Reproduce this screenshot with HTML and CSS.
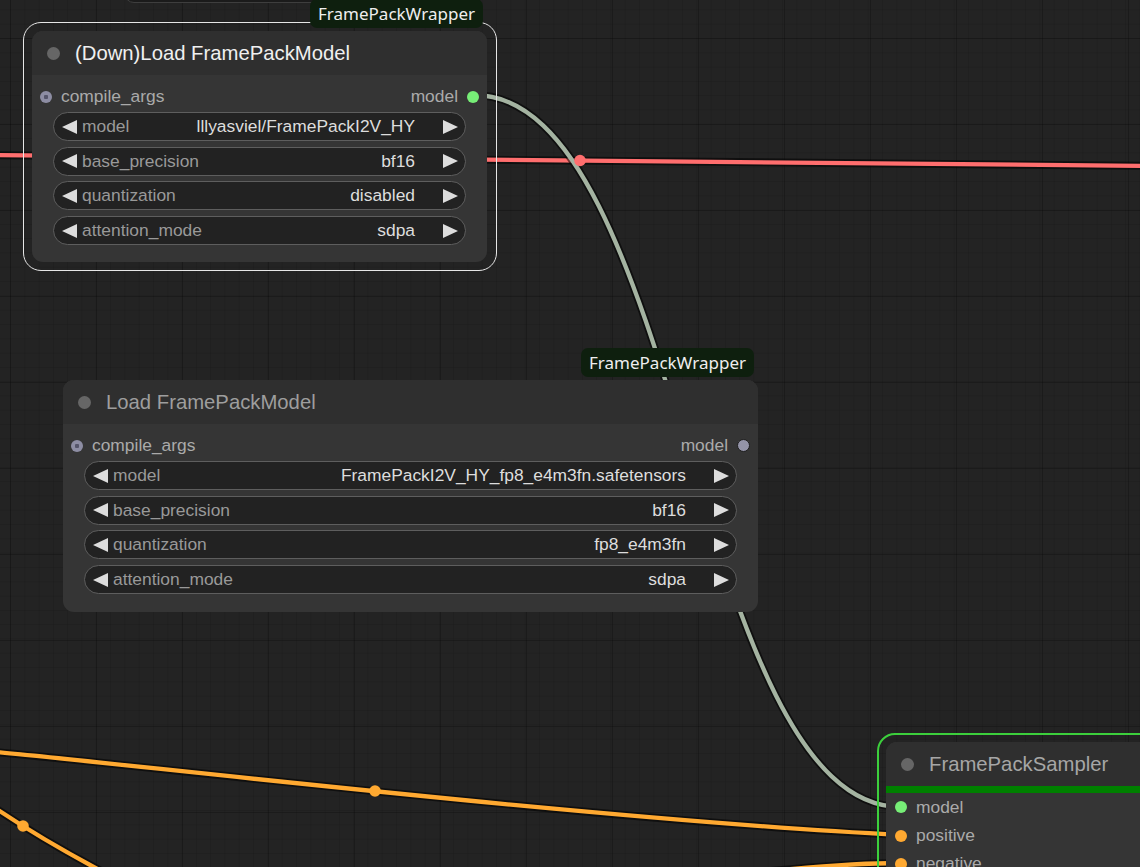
FILE: index.html
```html
<!DOCTYPE html>
<html>
<head>
<meta charset="utf-8">
<link rel="stylesheet" href="styles.css">
</head>
<body>
<div class="canvas">
  <div class="ghost"></div>
  <svg class="links" width="1140" height="867" viewBox="0 0 1140 867">
    <g fill="none" stroke-linecap="round">
      <path class="lb" d="M -20 155 C 300 157, 700 161, 1160 166"/>
      <path class="lc red" d="M -20 155 C 300 157, 700 161, 1160 166"/>
      <path class="lb" d="M 474 95 C 681 95, 694 807, 901 807"/>
      <path class="lc gray" d="M 474 95 C 681 95, 694 807, 901 807"/>
      <path class="lb" d="M -5 752 C 120 763, 600 820, 901 835"/>
      <path class="lc orange" d="M -5 752 C 120 763, 600 820, 901 835"/>
      <path class="lb" d="M -25 794 C 0 812, 35 836, 105 873"/>
      <path class="lc orange" d="M -25 794 C 0 812, 35 836, 105 873"/>
      <path class="lb" d="M 760 872 C 820 866, 860 863, 901 863"/>
      <path class="lc orange" d="M 760 872 C 820 866, 860 863, 901 863"/>
    </g>
    <circle class="mid red-f" cx="580" cy="160.5" r="5.8"/>
    <circle class="mid orange-f" cx="375" cy="791" r="5.8"/>
    <circle class="mid orange-f" cx="23" cy="826" r="5.8"/>
  </svg>

  <div class="node n1 selected">
    <div class="badge">FramePackWrapper</div>
    <div class="title"><span class="tdot"></span><span>(Down)Load FramePackModel</span></div>
    <div class="body">
      <div class="slots">
        <div class="slot"><span class="dot opt"></span><span>compile_args</span></div>
        <div class="slot"><span>model</span><span class="dot on"></span></div>
      </div>
      <div class="widget"><svg class="arr" viewBox="0 0 15 14"><polygon points="15,0 0,7 15,14"/></svg><span class="wl">model</span><span class="wv">lllyasviel/FramePackI2V_HY</span><svg class="arr" viewBox="0 0 15 14"><polygon points="0,0 15,7 0,14"/></svg></div>
      <div class="widget"><svg class="arr" viewBox="0 0 15 14"><polygon points="15,0 0,7 15,14"/></svg><span class="wl">base_precision</span><span class="wv">bf16</span><svg class="arr" viewBox="0 0 15 14"><polygon points="0,0 15,7 0,14"/></svg></div>
      <div class="widget"><svg class="arr" viewBox="0 0 15 14"><polygon points="15,0 0,7 15,14"/></svg><span class="wl">quantization</span><span class="wv">disabled</span><svg class="arr" viewBox="0 0 15 14"><polygon points="0,0 15,7 0,14"/></svg></div>
      <div class="widget"><svg class="arr" viewBox="0 0 15 14"><polygon points="15,0 0,7 15,14"/></svg><span class="wl">attention_mode</span><span class="wv">sdpa</span><svg class="arr" viewBox="0 0 15 14"><polygon points="0,0 15,7 0,14"/></svg></div>
    </div>
  </div>

  <div class="node n2">
    <div class="badge">FramePackWrapper</div>
    <div class="title"><span class="tdot"></span><span>Load FramePackModel</span></div>
    <div class="body">
      <div class="slots">
        <div class="slot"><span class="dot opt"></span><span>compile_args</span></div>
        <div class="slot"><span>model</span><span class="dot off"></span></div>
      </div>
      <div class="widget"><svg class="arr" viewBox="0 0 15 14"><polygon points="15,0 0,7 15,14"/></svg><span class="wl">model</span><span class="wv">FramePackI2V_HY_fp8_e4m3fn.safetensors</span><svg class="arr" viewBox="0 0 15 14"><polygon points="0,0 15,7 0,14"/></svg></div>
      <div class="widget"><svg class="arr" viewBox="0 0 15 14"><polygon points="15,0 0,7 15,14"/></svg><span class="wl">base_precision</span><span class="wv">bf16</span><svg class="arr" viewBox="0 0 15 14"><polygon points="0,0 15,7 0,14"/></svg></div>
      <div class="widget"><svg class="arr" viewBox="0 0 15 14"><polygon points="15,0 0,7 15,14"/></svg><span class="wl">quantization</span><span class="wv">fp8_e4m3fn</span><svg class="arr" viewBox="0 0 15 14"><polygon points="0,0 15,7 0,14"/></svg></div>
      <div class="widget"><svg class="arr" viewBox="0 0 15 14"><polygon points="15,0 0,7 15,14"/></svg><span class="wl">attention_mode</span><span class="wv">sdpa</span><svg class="arr" viewBox="0 0 15 14"><polygon points="0,0 15,7 0,14"/></svg></div>
    </div>
  </div>

  <div class="node n3 running">
    <div class="title"><span class="tdot"></span><span>FramePackSampler</span></div>
    <div class="progress"></div>
    <div class="inputs">
      <div class="slot row"><span class="dot on"></span><span>model</span></div>
      <div class="slot row"><span class="dot cond"></span><span>positive</span></div>
      <div class="slot row"><span class="dot cond"></span><span>negative</span></div>
    </div>
  </div>
</div>
</body>
</html>
```

FILE: styles.css
```css
html, body {
  margin: 0;
  padding: 0;
  background: #222;
}

.canvas {
  position: relative;
  width: 1140px;
  height: 867px;
  overflow: hidden;
  background-color: #232323;
  background-image:
    linear-gradient(to right, rgba(0,0,0,0.22) 1px, transparent 1px),
    linear-gradient(to bottom, rgba(0,0,0,0.22) 1px, transparent 1px),
    linear-gradient(to right, rgba(0,0,0,0.09) 1px, transparent 1px),
    linear-gradient(to bottom, rgba(0,0,0,0.09) 1px, transparent 1px);
  background-size: 86px 86px, 86px 86px, 14.3px 14.3px, 14.3px 14.3px;
  background-position: 10px 38px, 10px 38px, 10px 38px, 10px 38px;
  font-family: "Liberation Sans", Arial, sans-serif;
}

.ghost {
  position: absolute;
  left: 124px;
  top: -30px;
  width: 268px;
  height: 33px;
  box-sizing: border-box;
  border: 1px solid #3e3e3e;
  border-radius: 10px;
  background: #1b1b1b;
}

.links {
  position: absolute;
  left: 0;
  top: 0;
}

.lb {
  stroke: #000;
  stroke-opacity: 0.55;
  stroke-width: 8;
}

.lc {
  stroke-width: 4.3;
}

.red { stroke: #ff6e6e; }
.gray { stroke: #a4b3a1; }
.orange { stroke: #ffa931; }
.red-f { fill: #ff6e6e; }
.orange-f { fill: #ffa931; }

/* nodes */
.node {
  position: absolute;
  background: #353535;
  border-radius: 11px;
}

.n1 { left: 32px; top: 31px; width: 455px; height: 231px; }
.n2 { left: 63px; top: 380px; width: 695px; height: 232px; }
.n3 { left: 886px; top: 742px; width: 420px; height: 220px; }

.selected::before,
.running::before {
  content: "";
  position: absolute;
  left: -9.5px;
  top: -9px;
  right: -9.5px;
  bottom: -8.5px;
  border: 1.5px solid #e6e6e6;
  border-radius: 18px;
  pointer-events: none;
}

.running::before {
  border: 2px solid #3ccf3c;
  left: -9.5px;
  top: -9.5px;
}

.badge {
  position: absolute;
  right: 4px;
  bottom: 100%;
  margin-bottom: 3px;
  height: 29px;
  padding: 0 8px;
  display: flex;
  align-items: center;
  background: #0e1f0e;
  color: #eeeeee;
  font-family: "Noto Sans", "Open Sans", sans-serif;
  font-size: 17px;
  border-radius: 7px;
  white-space: nowrap;
}

.title {
  height: 44px;
  display: flex;
  align-items: center;
  gap: 15px;
  padding-left: 15px;
  background: #2f2f2f;
  border-radius: 11px 11px 0 0;
  font-size: 20.3px;
  color: #9e9e9e;
  white-space: nowrap;
}

.n1 .title { color: #f0f0f0; }
.n3 .title { color: #a6a6a6; }

.tdot {
  width: 13px;
  height: 13px;
  border-radius: 50%;
  background: #666;
  flex: none;
}

.body {
  padding: 7px 21px 0;
}

.slots {
  display: flex;
  justify-content: space-between;
  align-items: center;
  height: 29px;
  margin: 0 -13px 1px;
}

.slot {
  display: flex;
  align-items: center;
  gap: 9px;
  font-size: 17.4px;
  color: #aaaaaa;
  white-space: nowrap;
}

.dot {
  width: 12px;
  height: 12px;
  border-radius: 50%;
  flex: none;
  box-sizing: border-box;
}

.dot.opt {
  background: radial-gradient(circle, #55556a 0 2px, #8d8da3 2.5px);
}

.dot.on { background: #77ee77; }
.dot.cond { background: #ffa931; }

.dot.off {
  width: 13px;
  height: 13px;
  background: #9494a8;
  border: 1.5px solid #1e1e1e;
}

.widget {
  height: 29px;
  box-sizing: border-box;
  border: 1px solid #5e5e5e;
  border-radius: 15px;
  background: #222;
  display: flex;
  align-items: center;
  padding: 0 7px 0 8px;
  font-size: 17.4px;
  margin-top: 5.7px;
}

.slots + .widget { margin-top: 0; }

.arr {
  width: 15px;
  height: 14px;
  flex: none;
  fill: #dddddd;
}

.wl {
  color: #999999;
  margin-left: 5px;
  flex: 1;
  white-space: nowrap;
}

.wv {
  color: #dddddd;
  margin-right: 28px;
  white-space: nowrap;
}

.progress {
  height: 7px;
  background: #008000;
}

.inputs {
  padding-left: 9px;
}

.row {
  height: 28.4px;
}
```
